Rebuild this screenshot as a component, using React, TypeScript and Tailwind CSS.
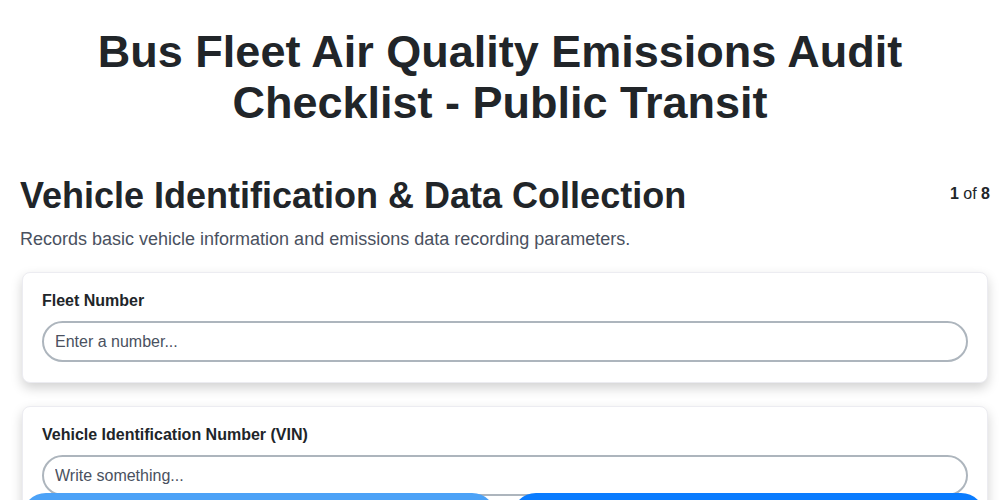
import React from 'react';

const fields = [
  { label: 'Fleet Number', placeholder: 'Enter a number...', type: 'number' },
  { label: 'Vehicle Identification Number (VIN)', placeholder: 'Write something...', type: 'text' },
];

const App: React.FC = () => {
  return (
    <div className="min-h-screen bg-white font-['Liberation_Sans',Arial,sans-serif] text-[#212529]">
      <h1 className="mx-auto max-w-[880px] pt-[26px] text-center text-[45px] font-bold leading-[51px]">
        Bus Fleet Air Quality Emissions Audit Checklist - Public Transit
      </h1>

      <div className="pl-5 pr-[10px] pt-[46px]">
        <div className="flex items-start justify-between">
          <h2 className="text-[36px] font-bold leading-[44px]">Vehicle Identification &amp; Data Collection</h2>
          <div className="pt-[8px] text-[16px]">
            <span className="font-bold">1</span> of <span className="font-bold">8</span>
          </div>
        </div>
        <p className="mt-[8px] text-[18px] leading-[27px] text-[#4a5160]">
          Records basic vehicle information and emissions data recording parameters.
        </p>

        <div className="mt-[19px] ml-[2px] mr-[2px] flex flex-col gap-[23px]">
          {fields.map((f) => (
            <div
              key={f.label}
              className="rounded-[8px] border border-[#ececf1] bg-white px-[19px] pb-[20px] pt-[16px] shadow-[0_5px_12px_rgba(0,0,0,0.18)]"
            >
              <label className="block text-[16px] font-bold leading-[24px]">{f.label}</label>
              <input
                type={f.type}
                placeholder={f.placeholder}
                className="mt-[8px] h-[41px] w-full rounded-full border-2 border-[#adb5bd] px-[11px] text-[16px] placeholder:text-[#4a5160] focus:outline-none"
              />
            </div>
          ))}
        </div>
      </div>

      <div className="fixed bottom-[-41px] left-0 right-0 flex gap-4 pl-[22px] pr-[15px]">
        <button className="flex h-12 flex-1 items-end justify-center rounded-full bg-[#4ca2f7] pb-3 font-bold text-white">Previous</button>
        <button className="flex h-12 flex-1 items-end justify-center rounded-full bg-[#0a7cff] pb-3 font-bold text-white">Next</button>
      </div>
    </div>
  );
};

export default App;
